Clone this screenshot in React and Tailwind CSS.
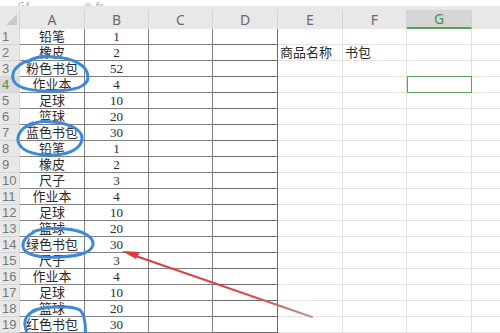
import React from "react";

const rows = [
  ["铅笔", "1"],
  ["橡皮", "2"],
  ["粉色书包", "52"],
  ["作业本", "4"],
  ["足球", "10"],
  ["篮球", "20"],
  ["蓝色书包", "30"],
  ["铅笔", "1"],
  ["橡皮", "2"],
  ["尺子", "3"],
  ["作业本", "4"],
  ["足球", "10"],
  ["篮球", "20"],
  ["绿色书包", "30"],
  ["尺子", "3"],
  ["作业本", "4"],
  ["足球", "10"],
  ["篮球", "20"],
  ["红色书包", "30"],
];

const cellFont = {
  fontFamily: '"Liberation Serif", "Noto Sans CJK SC", serif',
};

export default function App() {
  return (
    <div className="relative w-[500px] h-[333px] overflow-hidden bg-white">
      {/* top strip (formula bar remnant) */}
      <div className="h-[6px] bg-white overflow-hidden flex items-end text-[9px] text-[#a0a0a0] leading-none" style={{ fontFamily: '"Noto Sans", sans-serif' }}>
        <span className="ml-[18px] -mb-[4px]">G4</span>
        <span className="ml-[54px] -mb-[4px]">◎</span>
        <span className="ml-[4px] -mb-[4px]">fx</span>
      </div>
      <div className="h-[4px] bg-[#e8e8e8]" />
      {/* column header */}
      <div className="flex h-[19px] bg-[#e8e8e8] text-[14px] text-[#6a6a6a] leading-none" style={{ fontFamily: '"Noto Sans", sans-serif' }}>
        <div className="w-[20px] relative border-r border-[#d0d0d0]">
          <svg className="absolute left-[5px] top-[3px]" width="13" height="13" viewBox="0 0 13 13">
            <polygon points="12,1 12,12 1,12" fill="#c8c8c8" />
          </svg>
        </div>
        {["A", "B", "C", "D", "E", "F"].map((c, i) => (
          <div key={c} className={`${i === 0 || i === 3 || i === 4 ? "w-[65px]" : "w-[64px]"} border-r border-[#d4d4d4] flex items-center justify-center`}>
            {c}
          </div>
        ))}
        <div className="w-[65px] bg-[#d6d6d6] border-r border-[#d0d0d0] border-b-2 border-b-[#5f9f5f] text-[#4f8f4f] flex items-center justify-center">
          G
        </div>
        <div className="flex-1" />
      </div>
      {/* body */}
      <div className="flex flex-col">
        {rows.map((r, i) => {
          const n = i + 1;
          return (
            <div key={n} className="flex h-[16px]">
              <div
                className={`w-[20px] overflow-hidden border-r border-b border-[#d6d6d6] pl-[2px] flex items-center text-[13px] leading-[13px] ${n === 4 ? "bg-[#dadada] text-[#4f8f4f]" : "bg-[#e8e8e8] text-[#777]"}`}
                style={{ fontFamily: '"Liberation Sans", sans-serif' }}
              >
                {n}
              </div>
              <div className="w-[65px] border-r border-b border-[#808080] text-center text-[13px] leading-[15px] text-[#2a2a2a]" style={cellFont}>
                {r[0]}
              </div>
              <div className="w-[64px] border-r border-b border-[#808080] text-center text-[13px] leading-[15px] text-[#2a2a2a]" style={cellFont}>
                {r[1]}
              </div>
              <div className="w-[64px] border-r border-b border-[#808080]" />
              <div className="w-[65px] border-r border-b border-[#6a6a6a]" />
              <div className="w-[65px] border-r border-b border-[#e2e2e2] pl-[2px] text-[13px] leading-[15px] text-[#2a2a2a] whitespace-nowrap" style={cellFont}>
                {n === 2 ? "商品名称" : ""}
              </div>
              <div className="w-[64px] border-r border-b border-[#e2e2e2] pl-[2px] text-[13px] leading-[15px] text-[#2a2a2a] whitespace-nowrap" style={cellFont}>
                {n === 2 ? "书包" : ""}
              </div>
              <div className={`w-[65px] border-r border-b ${n === 4 ? "border-[#5f9f5f] border-l border-t -mt-[1px] h-[17px]" : "border-[#e2e2e2]"}`} />
              <div className="flex-1 border-b border-[#e2e2e2]" />
            </div>
          );
        })}
      </div>
      {/* annotations */}
      <svg className="absolute inset-0 pointer-events-none" width="500" height="333" viewBox="0 0 500 333">
        <defs>
          <linearGradient id="rg" x1="123" y1="252" x2="312" y2="317" gradientUnits="userSpaceOnUse">
            <stop offset="0" stopColor="#e0393b" />
            <stop offset="0.7" stopColor="#d94a4a" />
            <stop offset="1" stopColor="#b89a9a" />
          </linearGradient>
        </defs>
        <g fill="none" stroke="#3a8ad8" strokeWidth="3" strokeLinecap="round" strokeLinejoin="round">
          <path d="M32,60 C20,62 11,70 13,79 C15,88 30,91 50,91 C70,91 88,88 88,77 C88,65 72,58 55,57 C45,56 33,57 28,62" />
          <path d="M33,123 C24,126 17,133 18,141 C20,151 35,156 55,155 C72,154 82,147 82,138 C82,129 68,123 52,122 C44,121 36,122 32,125" />
          <path d="M34,232 C26,236 22,242 23,247 C25,255 40,258 60,257 C80,256 94,252 93,243 C92,235 80,230 65,229 C52,228 40,229 33,232" />
          <path d="M36,310 C28,313 24,319 25,325 C26,330 27,334 28,340" />
          <path d="M33,311 C45,306 70,305 80,310 C86,316 86,328 85,340" />
        </g>
        <path d="M130,254 L312,317" stroke="url(#rg)" strokeWidth="2" fill="none" strokeLinecap="round" />
        <polygon points="122,251 140,252 136,259" fill="#e0393b" />
      </svg>
    </div>
  );
}
